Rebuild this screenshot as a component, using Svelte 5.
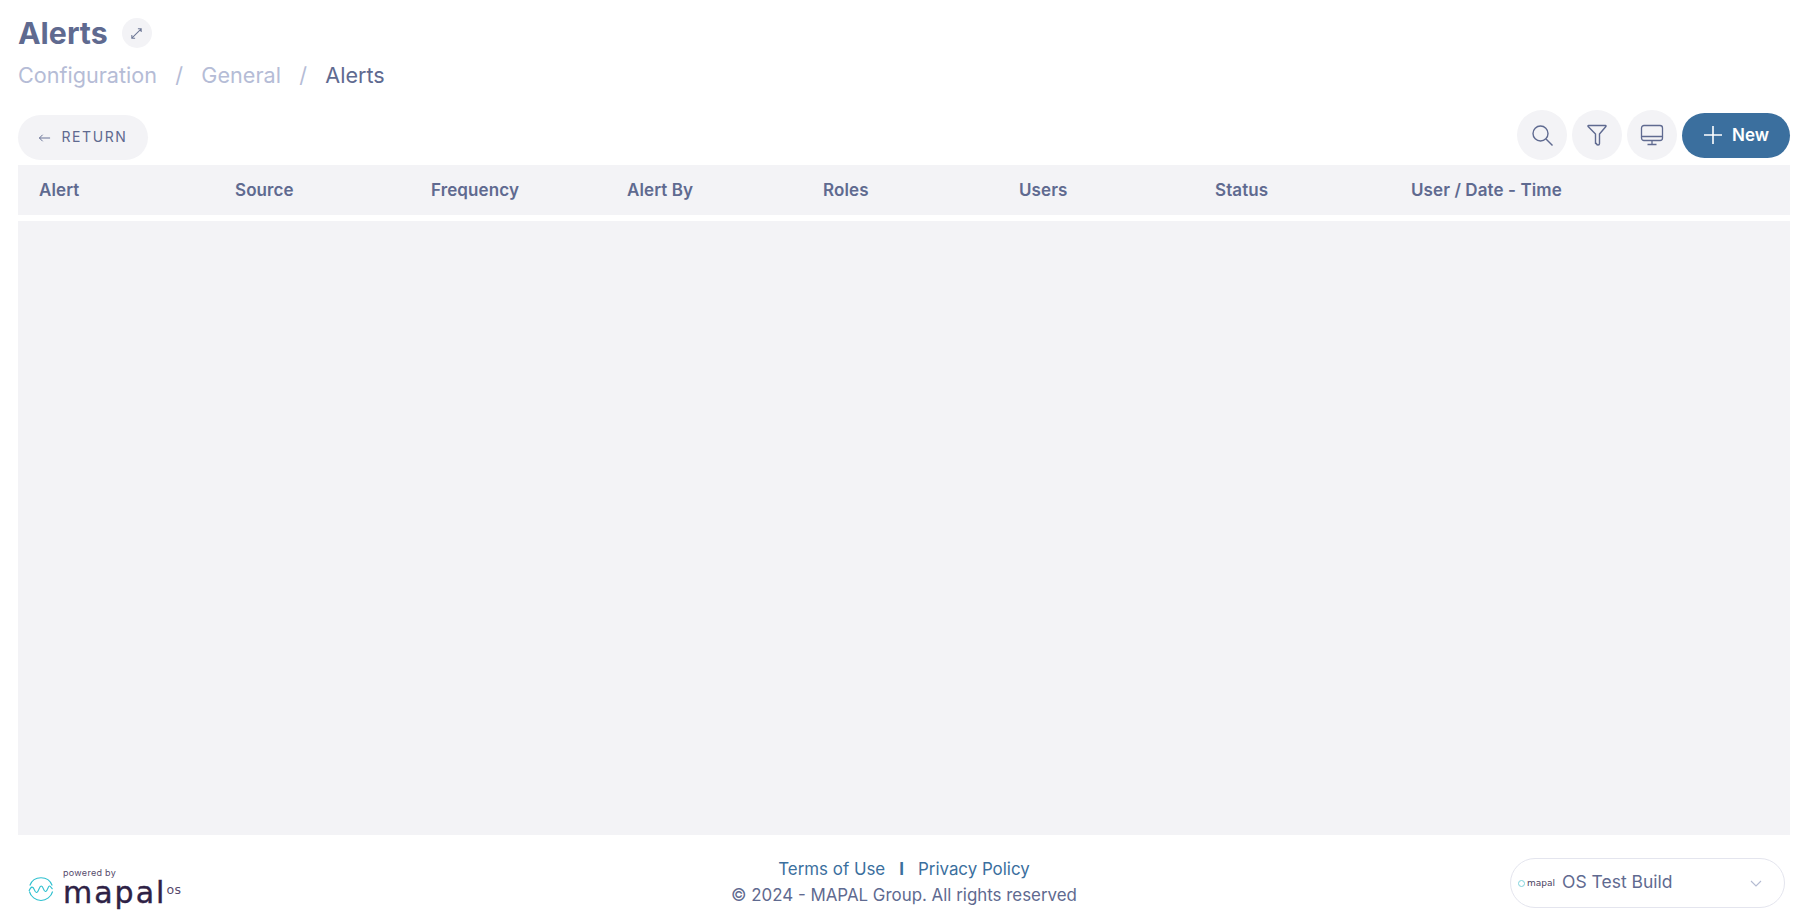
<script>
	const columns = ['Alert', 'Source', 'Frequency', 'Alert By', 'Roles', 'Users', 'Status', 'User / Date - Time'];
</script>

<div class="page">
	<header class="head">
		<div class="title-row">
			<h1>Alerts</h1>
			<button class="expand" aria-label="Expand">
				<svg viewBox="0 0 16 16" width="15" height="15" fill="none" stroke="currentColor" stroke-width="1.1">
					<path d="M3 13 13 3M9.500 3H13v3.500M3 9.500V13h3.500" />
				</svg>
			</button>
		</div>
		<nav class="crumbs">
			<span class="link">Configuration</span>
			<span class="sep">/</span>
			<span class="link">General</span>
			<span class="sep">/</span>
			<span class="current">Alerts</span>
		</nav>
	</header>

	<div class="toolbar">
		<button class="return">
			<svg viewBox="0 0 14 10" width="13" height="10" fill="none" stroke="currentColor" stroke-width="1">
				<path d="M13 5H1.500M5 1.500 1.500 5 5 8.500" />
			</svg>
			<span class="return-label">RETURN</span>
		</button>
		<div class="actions">
			<button class="round" aria-label="Search">
				<svg viewBox="0 0 24 24" width="24" height="24" fill="none" stroke="currentColor" stroke-width="1.4">
					<circle cx="10.500" cy="10.500" r="7.500" />
					<path d="m16 16 6.500 6.500" />
				</svg>
			</button>
			<button class="round" aria-label="Filter">
				<svg viewBox="0 0 24 24" width="24" height="24" fill="none" stroke="currentColor" stroke-width="1.4" stroke-linejoin="round">
					<path d="M3.500 2.500h17a.6.6 0 0 1 .4 1L14.500 11v9.500a1.500 1.500 0 0 1-3 0l-1-.0V11L3.100 3.500a.6.6 0 0 1 .4-1Z" />
				</svg>
			</button>
			<button class="round" aria-label="Display">
				<svg viewBox="0 0 24 24" width="24" height="24" fill="none" stroke="currentColor" stroke-width="1.3">
					<rect x="1.500" y="2.500" width="21" height="15" rx="2.500" />
					<path d="M1.500 13.500h21M12 17.500v4M7.500 21.500h9" />
				</svg>
			</button>
			<button class="new">
				<svg viewBox="0 0 20 20" width="20" height="20" fill="none" stroke="currentColor" stroke-width="1.6">
					<path d="M10 1v18M1 10h18" />
				</svg>
				New
			</button>
		</div>
	</div>

	<div class="table-head">
		{#each columns as col}
			<div class="col">{col}</div>
		{/each}
	</div>
	<div class="table-body"></div>

	<footer class="foot">
		<div class="brand">
			<svg class="wave" viewBox="0 0 26 26" width="26" height="26" fill="none" stroke="#2fc0cf" stroke-width="1.1">
				<path d="M1.800 9.500a12 12 0 0 1 22.400 0M24.600 15.500a12 12 0 0 1-23.200 0" />
				<path d="M1 15c2-5 4-5 5.500-1s3 3 4.500-1 3-4 4.500 0 3 3 4.500-1 2.500-1 4.500 1" />
			</svg>
			<div class="brand-text">
				<span class="powered">powered by</span>
				<span class="wordmark">mapal<small>os</small></span>
			</div>
		</div>
		<div class="legal">
			<div class="links">
				<span>Terms of Use</span>
				<b>I</b>
				<span>Privacy Policy</span>
			</div>
			<div class="copy">© 2024 - MAPAL Group. All rights reserved</div>
		</div>
		<button class="build">
			<span class="mini"><i></i>mapal</span>
			<span class="build-name">OS Test Build</span>
			<svg viewBox="0 0 12 7" width="12" height="7" fill="none" stroke="#b4bbd2" stroke-width="1.1">
				<path d="m1 1 5 5 5-5" />
			</svg>
		</button>
	</footer>
</div>

<style>
	:global(body) {
		margin: 0;
		background: #fff;
	}

	.page {
		box-sizing: border-box;
		height: 914px;
		padding: 0 19px 0 18px;
		display: flex;
		flex-direction: column;
		font-family: Inter, 'Open Sans', sans-serif;
		color: #5f6a90;
	}

	button {
		border: 0;
		padding: 0;
		font-family: inherit;
		color: inherit;
		display: flex;
		align-items: center;
		justify-content: center;
	}

	.head {
		padding-top: 16px;
	}

	.title-row {
		display: flex;
		align-items: center;
		gap: 14px;
		height: 34px;
	}

	h1 {
		margin: 0;
		font-size: 30.300px;
		font-weight: 700;
		line-height: 34px;
	}

	.expand {
		width: 30px;
		height: 30px;
		border-radius: 50%;
		background: #f3f3f6;
		color: #6e7896;
	}

	.crumbs {
		display: flex;
		gap: 18.300px;
		margin-top: 11px;
		font-size: 21.600px;
		line-height: 28px;
		color: #b5bcd6;
	}

	.current {
		color: #5f6a90;
	}

	.toolbar {
		display: flex;
		justify-content: space-between;
		align-items: flex-end;
		margin-top: 21px;
		height: 50px;
	}

	.return {
		width: 130px;
		height: 45px;
		border-radius: 23px;
		background: #f3f3f6;
		gap: 10px;
		font-size: 14px;
		letter-spacing: 1.6px;
	}

	.return-label {
		margin-top: -2px;
	}

	.actions {
		display: flex;
		align-items: center;
		gap: 5px;
	}

	.round {
		width: 50px;
		height: 50px;
		border-radius: 50%;
		background: #f3f3f6;
	}

	.new {
		width: 108px;
		height: 45px;
		border-radius: 23px;
		background: #3b6f9e;
		color: #fff;
		gap: 9px;
		font-size: 17px;
		font-weight: 600;
	}

	.table-head {
		display: flex;
		align-items: center;
		height: 50px;
		margin-top: 5px;
		padding-left: 21px;
		background: #f3f3f6;
	}

	.col {
		flex: 0 0 196px;
		font-size: 17px;
		font-weight: 600;
		letter-spacing: 0.1px;
	}

	.table-body {
		flex: 1;
		margin-top: 6px;
		background: #f3f3f6;
	}

	.foot {
		position: relative;
		display: flex;
		align-items: flex-start;
		justify-content: space-between;
		height: 79px;
	}

	.brand {
		display: flex;
		align-items: flex-end;
		gap: 9px;
		padding: 32px 0 0 10px;
		color: #2e2145;
	}

	.wave {
		margin-bottom: 4px;
	}

	.brand-text {
		display: flex;
		flex-direction: column;
	}

	.powered {
		font-size: 9px;
		line-height: 11px;
		color: #55496b;
		letter-spacing: 0.3px;
	}

	.wordmark {
		margin-top: 2px;
		font-family: 'DejaVu Sans', sans-serif;
		font-size: 30px;
		line-height: 26px;
		letter-spacing: 2px;
		-webkit-text-stroke: 0.4px #2e2145;
	}

	.wordmark small {
		font-size: 12.500px;
		line-height: 0;
		letter-spacing: 0.5px;
		vertical-align: 9px;
		color: #55496b;
		-webkit-text-stroke: 0;
	}

	.legal {
		position: absolute;
		left: 0;
		right: 0;
		top: 21px;
		text-align: center;
		font-size: 16.900px;
		line-height: 26px;
		pointer-events: none;
	}

	.links {
		display: flex;
		justify-content: center;
		gap: 14px;
		color: #3b6f9e;
	}

	.links b {
		font-weight: 700;
	}

	.build {
		box-sizing: border-box;
		width: 275px;
		height: 50px;
		margin: 23px 5px 0 0;
		border: 1px solid #e4e5ee;
		border-radius: 25px;
		background: #fff;
		justify-content: flex-start;
		padding: 0 22px 0 7px;
	}

	.mini {
		display: flex;
		align-items: center;
		gap: 2px;
		width: 44px;
		font-family: 'DejaVu Sans', sans-serif;
		font-size: 9px;
		color: #4a3f62;
	}

	.mini i {
		width: 7px;
		height: 7px;
		border: 1px solid #7fd3dc;
		border-radius: 50%;
		box-sizing: border-box;
	}

	.build-name {
		flex: 1;
		text-align: left;
		font-size: 17.500px;
		line-height: 20px;
		margin-top: -2px;
	}
</style>
